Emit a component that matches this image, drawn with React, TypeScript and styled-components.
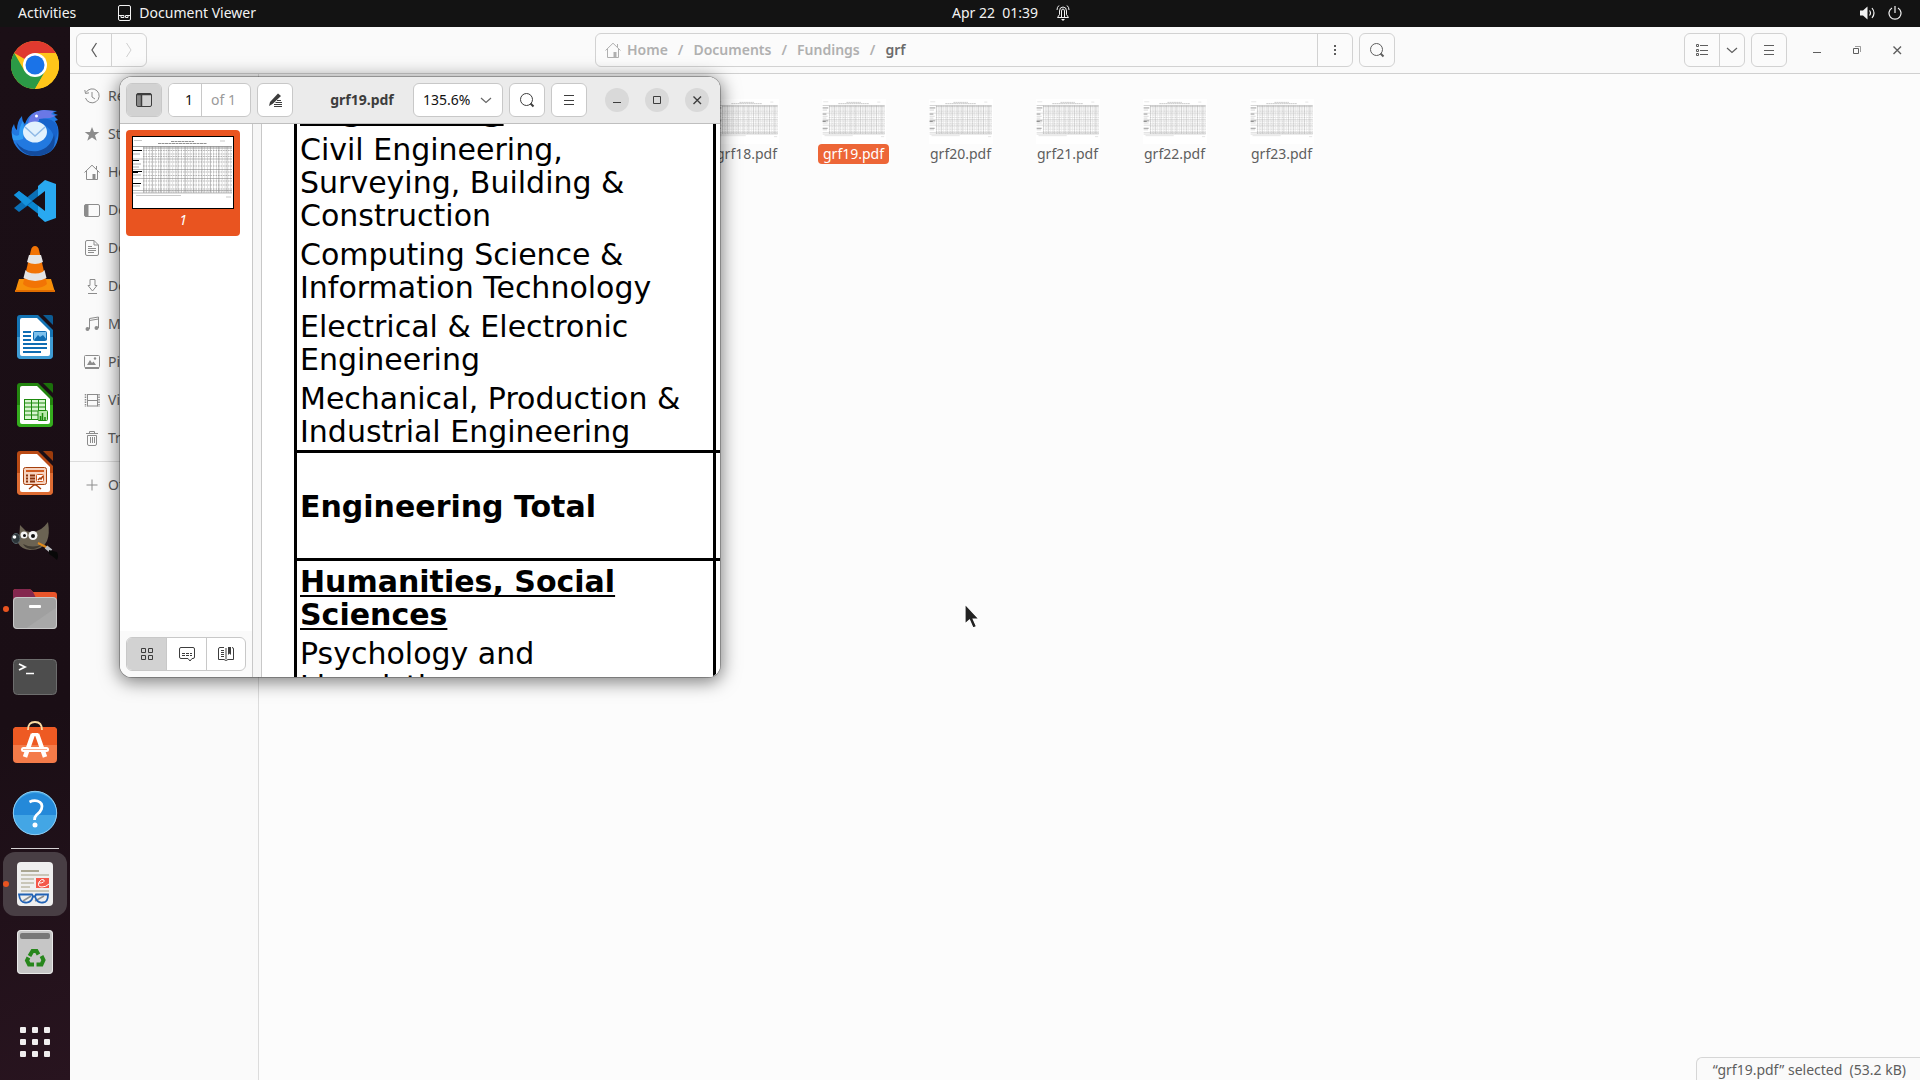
import React from "react";
import styled, { createGlobalStyle, css } from "styled-components";

const UI_FONT = `"Noto Sans", "Open Sans", sans-serif`;
const DOC_FONT = `"DejaVu Sans", Verdana, sans-serif`;

const Global = createGlobalStyle`
  *, *::before, *::after { box-sizing: border-box; }
  html, body, #root { height: 100%; }
  body { margin: 0; overflow: hidden; font-family: ${UI_FONT}; font-size: 14px; line-height: 20px; }
  button, input, select { font: inherit; color: inherit; margin: 0; padding: 0; }
  svg { display: block; flex: none; }
`;

/* ---------- shell ---------- */

const Desktop = styled.div`
  position: relative;
  display: flex;
  flex-direction: column;
  height: 100vh;
  background: #fcfcfc;
`;

const TopBar = styled.header`
  display: grid;
  grid-template-columns: 1fr auto 1fr;
  align-items: center;
  flex: none;
  height: 27px;
  padding-bottom: 1px;
  background: #131313;
  color: #f2f2f2;
`;

const BarGroup = styled.div<{ $end?: boolean }>`
  display: flex;
  align-items: center;
  gap: ${(p) => (p.$end ? 12 : 42)}px;
  padding: 0 18px;
  justify-content: ${(p) => (p.$end ? "flex-end" : "flex-start")};
`;

const BarButton = styled.button`
  display: flex;
  align-items: center;
  gap: 8px;
  border: 0;
  background: none;
  white-space: pre;
`;

const Clock = styled(BarButton)`
  gap: 18px;
  padding-left: 102px;
`;

const Workspace = styled.div`
  display: flex;
  flex: 1;
  min-height: 0;
`;

const Dock = styled.nav`
  display: flex;
  flex-direction: column;
  align-items: center;
  flex: none;
  width: 70px;
  padding: 4px 0;
  background: linear-gradient(160deg, #1b0f16 0%, #1a0e15 65%, #28141f 100%);
`;

const DockItem = styled.button<{ $active?: boolean; $running?: boolean }>`
  position: relative;
  display: grid;
  place-items: center;
  flex: none;
  width: 64px;
  height: 64px;
  margin: 2px 0;
  border: 0;
  border-radius: 12px;
  background: ${(p) => (p.$active ? "#483e44" : "none")};
  ${(p) =>
    p.$running &&
    css`
      &::before {
        content: "";
        position: absolute;
        left: 0;
        top: 29px;
        width: 6px;
        height: 6px;
        border-radius: 50%;
        background: #e95420;
      }
    `}
`;

const DockRule = styled.hr`
  flex: none;
  width: 48px;
  height: 1px;
  margin: 1px 0;
  border: 0;
  background: #d5d2d4;
`;

const Spacer = styled.div`
  flex: 1;
`;

/* ---------- file manager ---------- */

const FilesWindow = styled.section`
  display: flex;
  flex-direction: column;
  flex: 1;
  min-width: 0;
  background: #fcfcfc;
  color: #5e5e5e;
`;

const FilesHeader = styled.div`
  display: grid;
  grid-template-columns: 1fr minmax(0, 800px) 1fr;
  align-items: center;
  flex: none;
  height: 47px;
  padding: 0 6px;
  background: #fafafa;
  border-bottom: 1px solid #d0d0d0;
`;

const HeaderSide = styled.div<{ $end?: boolean }>`
  display: flex;
  align-items: center;
  gap: 6px;
  justify-content: ${(p) => (p.$end ? "flex-end" : "flex-start")};
`;

const Group = styled.div<{ $grow?: boolean; $strong?: boolean }>`
  display: flex;
  flex: ${(p) => (p.$grow ? 1 : "none")};
  min-width: 0;
  height: 34px;
  border: 1px solid ${(p) => (p.$strong ? "#c8c8c8" : "#d2d2d2")};
  border-radius: 6px;
  background: ${(p) => (p.$strong ? "#fff" : "#fbfbfb")};
  overflow: hidden;
  && > * + * {
    border-left: 1px solid ${(p) => (p.$strong ? "#c8c8c8" : "#d2d2d2")};
  }
`;

const Segment = styled.button<{ $w?: number; $on?: boolean }>`
  box-sizing: content-box;
  display: grid;
  place-items: center;
  flex: none;
  width: ${(p) => p.$w ?? 34}px;
  border: 0;
  background: ${(p) => (p.$on ? "#d2d2d2" : "transparent")};
`;

const Crumbs = styled.nav`
  display: flex;
  align-items: center;
  flex: 1;
  min-width: 0;
  gap: 10px;
  padding-left: 9px;
  color: #b0b0b0;
  font-weight: 600;
`;

const Crumb = styled.a<{ $here?: boolean }>`
  display: flex;
  align-items: center;
  gap: 6px;
  color: ${(p) => (p.$here ? "#6b6b6b" : "#b0b0b0")};
  text-decoration: none;
`;

const WindowControls = styled.div`
  display: flex;
  gap: 6px;
  padding-left: 7px;
`;

const WindowControl = styled.button`
  display: grid;
  place-items: center;
  width: 34px;
  height: 34px;
  border: 0;
  background: none;
`;

const FilesBody = styled.div`
  display: flex;
  flex: 1;
  min-height: 0;
`;

const Places = styled.nav`
  flex: none;
  width: 189px;
  padding-top: 3px;
  background: #fafafa;
  border-right: 1px solid #dcdcdc;
`;

const Place = styled.a`
  display: flex;
  align-items: center;
  gap: 8px;
  height: 38px;
  padding-left: 14px;
  color: #5e5e5e;
  text-decoration: none;
  svg {
    color: #8c8c8c;
  }
`;

const PlaceRule = styled.hr`
  height: 1px;
  margin: 4px 0;
  border: 0;
  background: #dcdcdc;
`;

const Listing = styled.main`
  display: flex;
  flex-direction: column;
  flex: 1;
  min-width: 0;
`;

const FileGrid = styled.div`
  display: grid;
  grid-template-columns: repeat(auto-fill, 107px);
  padding: 25px 6px 0;
  > :first-child {
    grid-column-start: 5;
  }
`;

const FileTile = styled.a`
  display: flex;
  flex-direction: column;
  align-items: center;
  color: #5e5e5e;
  text-decoration: none;
`;

const FileName = styled.span<{ $selected?: boolean }>`
  padding: 0 5px;
  border-radius: 4px;
  ${(p) => p.$selected && "background: #ed6637; color: #fff;"}
`;

const Status = styled.footer`
  align-self: flex-end;
  padding: 2px 14px 0 16px;
  border: 1px solid #d6d6d6;
  border-width: 1px 0 0 1px;
  border-top-left-radius: 6px;
  background: #fafafa;
  white-space: pre;
`;

/* ---------- document viewer ---------- */

const Viewer = styled.section`
  position: absolute;
  left: 120px;
  top: 77px;
  display: flex;
  flex-direction: column;
  width: 600px;
  height: 600px;
  border-radius: 12px;
  background: #fff;
  color: #3d3d3d;
  overflow: hidden;
`;

const ViewerShadow = styled.div`
  position: absolute;
  left: 120px;
  top: 77px;
  width: 600px;
  height: 600px;
  border-radius: 12px;
  box-shadow: 0 0 0 1px rgba(0, 0, 0, 0.25), 0 3px 18px 2px rgba(0, 0, 0, 0.5);
`;

const ViewerHeader = styled.div`
  display: flex;
  align-items: center;
  gap: 6px;
  flex: none;
  height: 47px;
  padding: 0 6px;
  background: #ebebeb;
  border-bottom: 1px solid #bfbfbf;
`;

const PageInput = styled.input`
  width: 32px;
  border: 0;
  padding-right: 8px;
  background: #fff;
  color: #111;
  text-align: right;
  outline: 0;
`;

const PageCount = styled.span`
  padding: 6px 14px 0 9px;
  color: #9a9a9a;
`;

const Title = styled.h1`
  flex: 1;
  margin: 0;
  padding-left: 18px;
  font-size: 14px;
  line-height: 20px;
  font-weight: 700;
  text-align: center;
`;

const ZoomBox = styled.label`
  display: grid;
  align-items: center;
  flex: none;
  width: 90px;
  height: 34px;
  border: 1px solid #c8c8c8;
  border-radius: 6px;
  background: #fff;
  color: #111;
  > * {
    grid-area: 1 / 1;
  }
  svg {
    justify-self: end;
    margin-right: 8px;
    color: #666;
    pointer-events: none;
  }
`;

const ZoomSelect = styled.select`
  appearance: none;
  width: 100%;
  height: 100%;
  padding-left: 9px;
  border: 0;
  background: none;
`;

const RoundControls = styled.div`
  display: flex;
  gap: 16px;
  padding: 0 5px 0 12px;
`;

const RoundButton = styled.button`
  display: grid;
  place-items: center;
  width: 24px;
  height: 24px;
  border: 0;
  border-radius: 50%;
  background: #d9d9d9;
`;

const ViewerBody = styled.div`
  display: flex;
  flex: 1;
  min-height: 0;
`;

const ThumbPane = styled.aside`
  display: flex;
  flex-direction: column;
  justify-content: space-between;
  flex: none;
  width: 133px;
  border-right: 1px solid #c8c8c8;
`;

const ThumbCard = styled.button`
  display: flex;
  flex-direction: column;
  align-items: center;
  gap: 1px;
  width: 114px;
  height: 106px;
  margin: 6px;
  padding: 6px;
  border: 0;
  border-radius: 4px;
  background: #e95420;
  color: #fff;
  font-style: italic;
`;

const ThumbTools = styled.div`
  display: flex;
  padding: 6px;
  background: #fafafa;
`;

const Canvas = styled.div`
  flex: 1;
  min-width: 0;
  padding-left: 8px;
  background: #f6f6f6;
  overflow: hidden;
`;

const Page = styled.div`
  height: 100%;
  padding-left: 32px;
  border-left: 1px solid #c8c8c8;
  background: #fff;
  overflow: hidden;
`;

/* The page is scrolled so that the first heading is almost out of view. */
const FundingTable = styled.table`
  width: 100%;
  margin-top: -34px;
  border-spacing: 0;
  table-layout: fixed;
  color: #000;
  font-family: ${DOC_FONT};
  font-size: 30px;
  line-height: 33px;
`;

const Cell = styled.td<{ $ruled?: boolean; $total?: boolean; $bold?: boolean }>`
  height: ${(p) => (p.$total ? 108 : 39)}px;
  padding: ${(p) => (p.$total ? "2px 0 0 3px" : "4px 0 2px 3px")};
  border-left: 3px solid #000;
  border-bottom: ${(p) => (p.$ruled ? 3 : 0)}px solid #000;
  font-weight: ${(p) => (p.$bold ? 700 : 400)};
  vertical-align: middle;
  white-space: pre-line;
`;

const Heading = styled.span`
  text-decoration: underline;
  text-decoration-thickness: 2px;
  text-decoration-skip-ink: none;
  text-underline-offset: 3px;
`;

const Pointer = styled.svg`
  position: absolute;
  left: 964px;
  top: 602px;
`;

/* ---------- small icons ---------- */

const I = ({ children, s = 16, w = 1 }: { children: React.ReactNode; s?: number; w?: number }) => (
  <svg width={s} height={s} viewBox="0 0 16 16" fill="none" stroke="currentColor" strokeWidth={w} aria-hidden="true">
    {children}
  </svg>
);

const HomeIcon = () => (
  <I>
    <path d="M.5 8.5 8 1.2l7.500 7.300M2.500 7v8.500h11V7M12.500 5V2" />
    <path d="M8.500 10h3v5.500h-3z" fill="currentColor" stroke="none" />
  </I>
);
const SearchIcon = () => (
  <I>
    <circle cx="7.500" cy="7.500" r="6" />
    <path d="m11.500 11.500 3 3" strokeWidth="2" />
  </I>
);
const MenuIcon = () => (
  <I>
    <path d="M3 3.500h10M3 8.500h10M3 12.500h10" />
  </I>
);
const DownIcon = () => (
  <I w={1.2}>
    <path d="m3 6 5 4.500L13 6" />
  </I>
);
const MinIcon = () => (
  <I>
    <path d="M4 10.500h8" />
  </I>
);
const CloseIcon = () => (
  <I w={1.4}>
    <path d="m4.500 4.500 7.500 7.500M12 4.500 4.500 12" />
  </I>
);

const places: [string, React.ReactNode][] = [
  ["Recent", <I><path d="M2 4.500A7 7 0 1 1 1.500 10M.8 2l.7 3.500L5 4.800M8 4v5l3 2" /></I>],
  ["Starred", <I><path d="m8 1 2 5h5.300l-4.300 3.300 1.700 5.500L8 11.500l-4.700 3.300L5 9.300.7 6H6z" fill="currentColor" stroke="none" /></I>],
  ["Home", <HomeIcon />],
  ["Desktop", <I><rect x=".5" y="2.500" width="15" height="12" rx="1.500" /><path d="M1 3h3v11H1z" fill="currentColor" /></I>],
  ["Documents", <I><path d="M3 .5h7l4.500 4.500v9q0 1.500-1.500 1.500H3q-1.500 0-1.500-1.500V2Q1.500.5 3 .5zM10 .5V5h4.500M4 6.500h4M4 8.500h8M4 10.500h8M4 12.500h6" /></I>],
  ["Downloads", <I><path d="M6 1.500h5v6h2L8.500 13 4 7.500h2zM4 15.500h9" /></I>],
  ["Music", <I><path d="M5.500 13V2.500l9-1.500v11M5.500 4.500l9-1.500" /><circle cx="3.500" cy="13" r="2" fill="currentColor" stroke="none" /><circle cx="12.500" cy="12" r="2" fill="currentColor" stroke="none" /></I>],
  ["Pictures", <I><rect x=".5" y="1.500" width="15" height="12" rx="1" /><path d="m3 11 3-5 2 3 1.500-1.500L12 11z" fill="currentColor" stroke="none" /><circle cx="11" cy="4.500" r="1.200" fill="currentColor" stroke="none" /><path d="M1 14h14" strokeWidth="2" /></I>],
  ["Videos", <I><path d="M3.500 2v12.500M13.500 2v12.500M3.500 2.500h10M3.500 8.500h10M3.500 14h10" /><path d="M1.500 2v13M15 2v13" strokeDasharray="1.500 1" strokeWidth="1.500" /></I>],
  ["Trash", <I><path d="M2 3.500h12M5.500 3V1.500h5V3M3.500 5.500V14q0 1.500 1.500 1.500h6q1.500 0 1.500-1.500V5.500zM6.500 7v6M8.500 7v6M10.500 7v6" /></I>],
];

/* ---------- page thumbnails ---------- */

const SheetThumb = ({ w, h, framed }: { w: number; h: number; framed?: boolean }) => (
  <svg width={w} height={h} viewBox="0 0 102 73" preserveAspectRatio="none" aria-hidden="true">
    <rect width="102" height="73" fill="#fff" />
    <g stroke={framed ? "#777" : "#999"} fill="none">
      <path d="M39 5.500h23M26 7.500h49" strokeDasharray="3 .5" strokeWidth=".8" />
      <path d="M2 4.500h8M88 5h5M4 59.500h45M94 61h5" strokeWidth=".4" />
      <path d="M1 10.500h99M11 12h89" strokeWidth=".7" />
      <path d="M11 14.500h89M11 18h89M11 20.500h89M11 26h89M11 30h89M11 36h89M11 39.500h89M11 45h89M11 49h89M11 53h89M11 56h89" strokeWidth="1" strokeDasharray="1.600 .9" opacity=".5" />
      <path d="M1 23h99M1 33.500h99M1 42.500h99M1 54.500h99M1 57h99" strokeWidth=".5" />
      <path d="M11.500 33.500H100" strokeWidth="46" strokeDasharray=".6 2.300" opacity=".4" />
      <path d="M11.500 33.500H100" strokeWidth="46" strokeDasharray=".8 7.500" opacity=".4" />
      <path d="M1 18h7M1 28h8M1 31h6M1 39h8M1 50h7" strokeWidth=".6" />
    </g>
    <path d="M1 14.500h9M1 24.500h6M1 35.500h9M1 36.500h5M1 47.500h8" stroke={framed ? "#000" : "#777"} strokeWidth="1.200" />
    {framed && <rect x=".5" y=".5" width="101" height="72" fill="none" stroke="#000" />}
  </svg>
);

/* ---------- dock artwork ---------- */

const Art = ({ children }: { children: React.ReactNode }) => (
  <svg width="48" height="48" viewBox="0 0 48 48" aria-hidden="true">{children}</svg>
);

const Office = ({ a, b, dark, children }: { a: string; b: string; dark: string; children: React.ReactNode }) => (
  <Art>
    <path d="M9 2h18l15 15v25q0 4-4 4H10q-4 0-4-4V5q0-3 3-3z" fill={a} />
    <path d="M6 24h36v18q0 4-4 4H10q-4 0-4-4z" fill={b} />
    <path d="M11 5h15l13 13v23q0 2-2 2H11q-2 0-2-2V7q0-2 2-2z" fill="#fff" />
    <path d="M32 2h8q2 0 2 2v8z" fill={dark} />
    {children}
  </Art>
);

const dockApps: { name: string; running?: boolean; art: React.ReactNode }[] = [
  {
    name: "Google Chrome",
    art: (
      <Art>
        <circle cx="24" cy="24" r="24" fill="#ffc61a" />
        <path d="M24 24 3.200 12A24 24 0 0 1 44.800 12z" fill="#e03a2f" />
        <path d="M3.200 12A24 24 0 0 0 24 48l10.400-18H13.600z" fill="#2b9a46" />
        <path d="M24 12h20.800A24 24 0 0 1 24 48l10.400-18z" fill="#ffc61a" />
        <circle cx="24" cy="24" r="12" fill="#fff" />
        <circle cx="24" cy="24" r="9.500" fill="#1a73e8" />
      </Art>
    ),
  },
  {
    name: "Thunderbird",
    art: (
      <Art>
        <path d="M3 34Q-2 22 3 15q1 5 3 6 0-9 5-14 0 5 3 8Q18 2 33 1l13 1-4 2 5 2-4 1 4 4-3 1q5 7 3 18-4 17-23 17Q10 47 3 34z" fill="#2279e0" />
        <path d="M17 14Q19 2 33 1l10 1-3 3 5 2-6 2q-9 0-14 5z" fill="#6a78e6" />
        <path d="M28 10q12-2 18 6 2 8-2 16-2-14-16-18z" fill="#1763cb" />
        <path d="M5 33q8 11 22 9 13-3 16-17 5 21-19 22Q10 46 5 33z" fill="#134c9f" />
        <path d="M1 24q3 4 7 2 0-8 4-14 2 9 0 18-6 2-10 1z" fill="#2f9bf3" />
        <ellipse cx="24" cy="23" rx="12" ry="10.500" fill="#e2f1fd" />
        <path d="m14 18 10 9 10-9" fill="none" stroke="#8fb9e6" strokeWidth="1.500" />
        <circle cx="25.500" cy="7" r="1.500" fill="#fff" />
      </Art>
    ),
  },
  {
    name: "Visual Studio Code",
    art: (
      <Art>
        <path d="m3 18 5-4 27 20v9z" fill="#0a86cf" />
        <path d="m3 31 5 4 27-20V5z" fill="#0b6fb5" />
        <path d="M34 3 45 7v34l-11 4-7-6V9z" fill="#29a9f1" />
        <path d="m34 14-13 10 13 10z" fill="#1a0e15" />
        <path d="m3 18 5-4 13 10-6 5z" fill="#1492dd" />
      </Art>
    ),
  },
  {
    name: "VLC",
    art: (
      <Art>
        <path d="M8 34h32l4 13H4z" fill="#f79009" />
        <path d="M4 45h40v2H4z" fill="#e06d00" />
        <path d="M24 1q3 0 4 4l8 34q-4 4-12 4t-12-4L20 5q1-4 4-4z" fill="#f27405" />
        <path d="m18 10 12 0 2 7q-8 4-16 0z" fill="#e4e4e4" />
        <path d="m14.500 25 2 2q8 3 15 0l2-2 2 8q-11 6-23 0z" fill="#e4e4e4" />
      </Art>
    ),
  },
  {
    name: "LibreOffice Writer",
    art: (
      <Office a="#1474b4" b="#3f9cd4" dark="#0c5c94">
        <path d="M12 19h8M12 23h8M12 27h8M12 31h24M12 35h24M12 39h18" stroke="#0f6db3" strokeWidth="2" />
        <rect x="22.500" y="18.500" width="13" height="9" rx="1" fill="#7cc0ec" stroke="#0f6db3" />
        <path d="m23 27 4-5 2 2 3-2 4 5z" fill="#0f6db3" />
      </Office>
    ),
  },
  {
    name: "LibreOffice Calc",
    art: (
      <Office a="#23860f" b="#35ad1e" dark="#1b700b">
        <rect x="13.500" y="18.500" width="21" height="20" fill="#d9f5d0" stroke="#1d8a0d" />
        <path d="M13 22h22M13 26h22M13 30h22M13 34h14M20.500 18v20M27.500 18v20" stroke="#1d8a0d" />
        <rect x="27" y="29.500" width="9.500" height="10" rx="1" fill="#b8e8aa" stroke="#1d8a0d" />
        <path d="M29.500 39v-4M31.500 39v-7M34 39v-3" stroke="#1d8a0d" strokeWidth="1.500" />
      </Office>
    ),
  },
  {
    name: "LibreOffice Impress",
    art: (
      <Office a="#b94a14" b="#dd6c33" dark="#9c3c0c">
        <rect x="12.500" y="18.500" width="23" height="17" rx="2" fill="#f6d3bf" stroke="#a5400d" />
        <path d="M15 22h18" stroke="#d05a1f" strokeWidth="2" />
        <path d="M15 26.500h2M15 29.500h2M15 32.500h2M19 26.500h5M19 29.500h5M19 32.500h5" stroke="#8a330a" strokeWidth="2" />
        <rect x="25.500" y="25.500" width="7" height="7" rx="1" fill="#fff" stroke="#d05a1f" />
        <path d="m27 31 2-2 1 1 2-3M18 40l5-4h2l5 4" stroke="#a5400d" fill="none" strokeWidth="1.500" />
      </Office>
    ),
  },
  {
    name: "GIMP",
    art: (
      <Art>
        <path d="m9 8 6 6q13 4 22-9 2 12-1 19-4 9-17 9-9-1-12-7 2-10 2-18z" fill="#6b6353" />
        <path d="M12 27q10 5 20 0-6 6-13 5-5-1-7-5z" fill="#3f3a31" />
        <circle cx="13" cy="18" r="3.500" fill="#f4f4f4" />
        <circle cx="22" cy="18.500" r="4.500" fill="#f4f4f4" />
        <circle cx="13.500" cy="18.500" r="1.500" fill="#111" />
        <circle cx="22" cy="19" r="2" fill="#111" />
        <ellipse cx="5" cy="21.500" rx="4" ry="5" fill="#2c3438" stroke="#56646b" />
        <circle cx="3.500" cy="20" r="1.800" fill="#fff" />
        <path d="m27 26 10 5" stroke="#e08a1c" strokeWidth="2" />
        <path d="m35 30 5 4" stroke="#b9bcc0" strokeWidth="4" />
        <path d="m38 33 8 2q2 4 0 8-3-3-8-6z" fill="#080808" />
      </Art>
    ),
  },
  {
    name: "Files",
    running: true,
    art: (
      <Art>
        <path d="M2 7q0-3 3-3h13q2 0 4 3h21q3 0 3 3v9H2z" fill="#e9552a" />
        <path d="M2 7q0-3 3-3h13q2 0 4 3l6 12H2z" fill="#84284f" />
        <rect x="2" y="12" width="44" height="32" rx="4" fill="#a0a0a0" />
        <path d="M46 22v18q0 4-4 4H14z" fill="#afafaf" opacity=".5" />
        <rect x="2.500" y="12.500" width="43" height="31" rx="3.500" fill="none" stroke="#c9c9c9" />
        <rect x="18" y="20" width="12" height="3" rx="1" fill="#fff" />
      </Art>
    ),
  },
  {
    name: "Terminal",
    art: (
      <Art>
        <rect x="2.500" y="6.500" width="43" height="35" rx="4" fill="#4d4d4d" stroke="#6d6d6d" />
        <path d="m8 11 6 3-6 3" fill="none" stroke="#fff" strokeWidth="1.800" />
        <path d="M15 20.500h8" stroke="#fff" strokeWidth="1.500" />
      </Art>
    ),
  },
  {
    name: "Ubuntu Software",
    art: (
      <Art>
        <rect x="2" y="6" width="44" height="36" rx="4" fill="#f47b49" />
        <path d="M2 10q0-4 4-4h36q4 0 4 4v14H2z" fill="#ee5a23" />
        <path d="M17 9q0-8 7-8t7 8" fill="none" stroke="#fbdca4" strokeWidth="1.800" />
        <path d="m22 13-8 23M26 13l8 23" stroke="#fff" strokeWidth="4.500" />
        <path d="M21 12h6v3h-6z" fill="#fff" />
        <path d="M12.500 28.500h23" stroke="#fff" strokeWidth="5" strokeLinecap="round" />
        <path d="M12 28.500h24" stroke="#f6b095" />
      </Art>
    ),
  },
  {
    name: "Help",
    art: (
      <Art>
        <circle cx="24" cy="24" r="22" fill="#43a6e5" />
        <path d="M2 26a22 22 0 0 1 44 0z" fill="#2489d9" />
        <circle cx="24" cy="24" r="21.700" fill="none" stroke="#8fcdf3" />
        <path d="M18.500 13q4-2 8-1 6 2 4 8-1 3-5 6-2 2-2 5" fill="none" stroke="#fff" strokeWidth="2.800" />
        <circle cx="24" cy="36" r="2.500" fill="#fff" />
      </Art>
    ),
  },
];

const EvinceArt = () => (
  <Art>
    <rect x="6" y="2" width="36" height="44" rx="4" fill="#efefef" />
    <path d="M10 11h18" stroke="#aaa692" strokeWidth="2" />
    <path d="M10 15h28M10 19h13M10 23h13M10 27h9M10 31h28" stroke="#c9c6b8" strokeWidth="2" />
    <rect x="25" y="18" width="13" height="10" fill="#f4574a" />
    <path d="M28 23q6 0 5-3-2-2-5 2-2 5 3 5 4 0 7-3" fill="none" stroke="#fff" />
    <path d="m12 41 8-5M24 41l9-5" stroke="#8f8f8f" strokeWidth="1.500" />
    <path d="M8 34.500h13l1 2h2l1-2h12q0 8-5 8-6 1-8-6h-2q-2 7-8 6-5 0-6-8z" fill="none" stroke="#2363b5" strokeWidth="1.800" />
  </Art>
);

const TrashArt = () => (
  <Art>
    <rect x="6" y="2" width="36" height="44" rx="4" fill="#c6c6c6" />
    <rect x="6.500" y="2.500" width="35" height="43" rx="3.500" fill="none" stroke="#e8e8e8" />
    <rect x="9" y="5" width="30" height="6" rx="2" fill="#787878" />
    <g fill="none" stroke="#27861c" strokeWidth="4">
      <path d="m18.500 28 3-5h4l2 3.500" />
      <path d="m30.500 28 2 4-2 4.500h-5" />
      <path d="M23 36.500h-5l-2-4 1.500-3" />
    </g>
  </Art>
);

/* ---------- document rows ---------- */

type Row = { text: string; heading?: boolean; total?: boolean; ruled?: boolean };
const rows: Row[] = [
  { text: "Engineering", heading: true },
  { text: "Civil Engineering,\nSurveying, Building &\nConstruction" },
  { text: "Computing Science &\nInformation Technology" },
  { text: "Electrical & Electronic\nEngineering" },
  { text: "Mechanical, Production &\nIndustrial Engineering", ruled: true },
  { text: "Engineering Total", total: true, ruled: true },
  { text: "Humanities, Social\nSciences", heading: true },
  { text: "Psychology and\nLinguistics" },
];

const files = ["grf18.pdf", "grf19.pdf", "grf20.pdf", "grf21.pdf", "grf22.pdf", "grf23.pdf"];

export default function App() {
  return (
    <>
      <Global />
      <Desktop>
        <TopBar>
          <BarGroup>
            <BarButton>Activities</BarButton>
            <BarButton>
              <svg width="13" height="16" viewBox="0 0 13 16" fill="none" stroke="#f2f2f2" aria-hidden="true">
                <rect x=".5" y=".5" width="12" height="15" rx="1.500" />
                <path d="M1 10.500h2m7 0h2M3 10.500h3v2H3zM7.500 10.500h2.500v2H7.500z" />
              </svg>
              Document Viewer
            </BarButton>
          </BarGroup>
          <Clock>
            {"Apr 22  01:39"}
            <svg width="14" height="16" viewBox="0 0 14 16" fill="none" stroke="#f2f2f2" aria-hidden="true">
              <path d="M1.500 12.500h11l-2-3V6q0-4-3.500-4T3.500 6v3.500zM5.500 12V6q0-2 1.500-2t1.500 2v6M1 5q0-3 2-4.500M13 5q0-3-2-4.500" />
              <path d="M5 14h4l-2 2z" fill="#f2f2f2" stroke="none" />
            </svg>
          </Clock>
          <BarGroup $end>
            <BarButton aria-label="Volume">
              <svg width="16" height="14" viewBox="0 0 16 14" fill="none" stroke="#f2f2f2" strokeWidth="1.200" aria-hidden="true">
                <path d="M0 4.500h3L7.500.5v13L3 9.500H0z" fill="#f2f2f2" stroke="none" />
                <path d="M9.500 4.500q2 2.500 0 5M12 2q4 5 0 10" />
              </svg>
            </BarButton>
            <BarButton aria-label="Power">
              <svg width="14" height="14" viewBox="0 0 14 14" fill="none" stroke="#f2f2f2" strokeWidth="1.200" aria-hidden="true">
                <path d="M4 2a6 6 0 1 0 6 0M7 0v7" />
              </svg>
            </BarButton>
          </BarGroup>
        </TopBar>

        <Workspace>
          <Dock>
            {dockApps.map((app) => (
              <DockItem key={app.name} aria-label={app.name} $running={app.running}>
                {app.art}
              </DockItem>
            ))}
            <DockRule />
            <DockItem aria-label="Document Viewer" $active $running>
              <EvinceArt />
            </DockItem>
            <DockItem aria-label="Trash">
              <TrashArt />
            </DockItem>
            <Spacer />
            <DockItem aria-label="Show Applications">
              <svg width="30" height="30" viewBox="0 0 30 30" fill="#f0eeee" aria-hidden="true">
                {[0, 12, 24].map((y) => [0, 12, 24].map((x) => <rect key={`${x}-${y}`} x={x} y={y} width="6" height="6" rx="1" />))}
              </svg>
            </DockItem>
          </Dock>

          <FilesWindow>
            <FilesHeader>
              <HeaderSide>
                <Group>
                  <Segment aria-label="Back"><I w={1.3}><path d="M10.500 1 6 8l4.500 7" /></I></Segment>
                  <Segment aria-label="Forward" disabled><svg width="16" height="16" viewBox="0 0 16 16" fill="none" stroke="#cfcfcf" aria-hidden="true"><path d="M5.500 1 10 8l-4.500 7" /></svg></Segment>
                </Group>
              </HeaderSide>
              <HeaderSide>
                <Group $grow>
                  <Crumbs aria-label="Path">
                    <Crumb href="#home"><HomeIcon />Home</Crumb>/
                    <Crumb href="#documents">Documents</Crumb>/
                    <Crumb href="#fundings">Fundings</Crumb>/
                    <Crumb href="#grf" $here>grf</Crumb>
                  </Crumbs>
                  <Segment aria-label="Folder menu"><I><path d="M8 3v2M8 7v2M8 11v2" strokeWidth="2" /></I></Segment>
                </Group>
                <Group>
                  <Segment aria-label="Search"><SearchIcon /></Segment>
                </Group>
              </HeaderSide>
              <HeaderSide $end>
                <Group>
                  <Segment aria-label="List view"><I><path d="M2.500 2.500h2v2h-2zM2.500 7.500h2v2h-2zM2.500 11.500h2v2h-2zM6 3.500h8M6 8.500h8M6 12.500h8" /></I></Segment>
                  <Segment $w={24} aria-label="View options"><DownIcon /></Segment>
                </Group>
                <Group>
                  <Segment aria-label="Menu"><MenuIcon /></Segment>
                </Group>
                <WindowControls>
                  <WindowControl aria-label="Minimise"><MinIcon /></WindowControl>
                  <WindowControl aria-label="Restore"><I><path d="M4.500 6.500h5v5h-5z" /><path d="M6 4.500h5.500V10" opacity=".6" /></I></WindowControl>
                  <WindowControl aria-label="Close"><CloseIcon /></WindowControl>
                </WindowControls>
              </HeaderSide>
            </FilesHeader>
            <FilesBody>
              <Places>
                {places.map(([name, icon]) => (
                  <Place key={name} href={`#${name}`}>{icon}{name}</Place>
                ))}
                <PlaceRule />
                <Place href="#other"><I><path d="M8 2.500v11M2.500 8h11" /></I>Other Locations</Place>
              </Places>
              <Listing>
                <FileGrid>
                  {files.map((name) => (
                    <FileTile key={name} href={`#${name}`}>
                      <SheetThumb w={64} h={45} />
                      <FileName $selected={name === "grf19.pdf"}>{name}</FileName>
                    </FileTile>
                  ))}
                </FileGrid>
                <Spacer />
                <Status>{"“grf19.pdf” selected  (53.2 kB)"}</Status>
              </Listing>
            </FilesBody>
          </FilesWindow>
        </Workspace>

        <ViewerShadow />
        <Viewer>
          <ViewerHeader>
            <Group $strong>
              <Segment $on aria-label="Side pane"><I><rect x=".5" y="1.500" width="15" height="13" rx="1.500" /><path d="M1 3h4v11H1z" fill="currentColor" opacity=".5" stroke="none" /><path d="M5.500 2v12M1 2.500h14" strokeWidth="1.500" /></I></Segment>
            </Group>
            <Group $strong>
              <PageInput aria-label="Page" defaultValue="1" />
              <PageCount>of 1</PageCount>
            </Group>
            <Group $strong>
              <Segment aria-label="Annotate"><I><path d="m2 14 1-4 8-8.500 3 2.500-8.500 8z" fill="currentColor" stroke="none" /><path d="M10 8.500h4M8.500 10.500H15M7 12.500h8M7 14.500h8" /></I></Segment>
            </Group>
            <Title>grf19.pdf</Title>
            <ZoomBox>
              <DownIcon />
              <ZoomSelect aria-label="Zoom" defaultValue="135.6%">
                <option>135.6%</option>
              </ZoomSelect>
            </ZoomBox>
            <Group $strong>
              <Segment aria-label="Find"><SearchIcon /></Segment>
            </Group>
            <Group $strong>
              <Segment aria-label="Menu"><MenuIcon /></Segment>
            </Group>
            <RoundControls>
              <RoundButton aria-label="Minimise"><MinIcon /></RoundButton>
              <RoundButton aria-label="Maximise"><I><path d="M4.500 4.500h7v7h-7z" /></I></RoundButton>
              <RoundButton aria-label="Close"><CloseIcon /></RoundButton>
            </RoundControls>
          </ViewerHeader>
          <ViewerBody>
            <ThumbPane>
              <ThumbCard>
                <SheetThumb w={102} h={73} framed />
                1
              </ThumbCard>
              <ThumbTools>
                <Group $strong>
                  <Segment $w={39} $on aria-label="Thumbnails"><I><path d="M2.500 2.500h4v4h-4zM9.500 2.500h4v4h-4zM2.500 9.500h4v4h-4zM9.500 9.500h4v4h-4z" /></I></Segment>
                  <Segment $w={39} aria-label="Annotations"><I><path d="M2 1.500h12q1.500 0 1.500 1.500v8q0 1.500-1.500 1.500h-1L11 15l-2-2.500H2Q.5 12.500.5 11V3Q.5 1.500 2 1.500z" /><path d="M3 7.500h10M3 9.500h10" strokeDasharray="3 1" /></I></Segment>
                  <Segment $w={38} aria-label="Bookmarks"><I><path d="M6 1.500H2Q.5 1.500.5 3v10.500H6l2 1 2-1h5.500V3q0-1.500-1.500-1.500M8 2v11M3 4.500h3M3 6.500h3M3 8.500h3M3 10.500h3" /><path d="M10 1h3v8l-1.500-1.500L10 9z" fill="currentColor" stroke="none" /></I></Segment>
                </Group>
              </ThumbTools>
            </ThumbPane>
            <Canvas>
              <Page>
                <FundingTable>
                  <colgroup>
                    <col width="419" />
                    <col />
                  </colgroup>
                  <tbody>
                    {rows.map((r) => (
                      <tr key={r.text}>
                        <Cell $ruled={r.ruled} $total={r.total} $bold={r.heading || r.total}>
                          {r.heading ? <Heading>{r.text}</Heading> : r.text}
                        </Cell>
                        <Cell $ruled={r.ruled} />
                      </tr>
                    ))}
                  </tbody>
                </FundingTable>
              </Page>
            </Canvas>
          </ViewerBody>
        </Viewer>

        <Pointer width="18" height="28" viewBox="0 0 18 28" aria-hidden="true">
          <path d="M1 2v20l4.500-4 3.500 8 3.500-1.500L9.200 17H15z" fill="#222" stroke="#fff" strokeWidth="1.200" />
        </Pointer>
      </Desktop>
    </>
  );
}
